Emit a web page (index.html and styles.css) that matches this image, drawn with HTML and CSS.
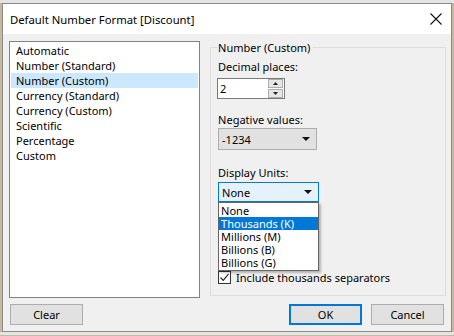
FILE: index.html
```html
<!DOCTYPE html>
<html lang="en">
<head>
<meta charset="UTF-8">
<title>Default Number Format [Discount]</title>
<link rel="stylesheet" href="styles.css">
</head>
<body>
  <div class="window">
    <div class="titlebar">
      <span class="title">Default Number Format [Discount]</span>
      <svg class="close" width="12" height="12" viewBox="0 0 12 12">
        <path d="M0.5 0.5 L11.5 11.5 M11.5 0.5 L0.5 11.5" stroke="#111" stroke-width="1.1" fill="none"/>
      </svg>
    </div>

    <div class="content">
      <ul class="format-list">
        <li>Automatic</li>
        <li>Number (Standard)</li>
        <li class="selected">Number (Custom)</li>
        <li>Currency (Standard)</li>
        <li>Currency (Custom)</li>
        <li>Scientific</li>
        <li>Percentage</li>
        <li>Custom</li>
      </ul>

      <fieldset class="options">
        <legend>Number (Custom)</legend>

        <div class="label first">Decimal places:</div>
        <div class="spinner">
          <span class="spin-value">2</span>
          <div class="spin-buttons">
            <div class="spin-btn">
              <svg width="5" height="3" viewBox="0 0 5 3"><path d="M0 3 L2.5 0 L5 3 Z" fill="#222"/></svg>
            </div>
            <div class="spin-btn">
              <svg width="5" height="3" viewBox="0 0 5 3"><path d="M0 0 L2.5 3 L5 0 Z" fill="#222"/></svg>
            </div>
          </div>
        </div>

        <div class="label">Negative values:</div>
        <div class="combo combo-negative">
          <span>-1234</span>
          <svg class="arrow" width="8" height="4" viewBox="0 0 8 4"><path d="M0 0 L8 0 L4 4 Z" fill="#111"/></svg>
        </div>

        <div class="label units">Display Units:</div>
        <div class="combo combo-units">
          <span>None</span>
          <svg class="arrow" width="8" height="4" viewBox="0 0 8 4"><path d="M0 0 L8 0 L4 4 Z" fill="#111"/></svg>
          <ul class="dropdown">
            <li>None</li>
            <li class="hover">Thousands (K)</li>
            <li>Millions (M)</li>
            <li>Billions (B)</li>
            <li>Billions (G)</li>
          </ul>
        </div>

        <label class="check-row">
          <span class="checkbox">
            <svg width="11" height="11" viewBox="0 0 11 11"><path d="M1.5 5.5 L4.2 8.3 L9.5 2.2" stroke="#222" stroke-width="1.2" fill="none"/></svg>
          </span>
          Include thousands separators
        </label>
      </fieldset>
    </div>

    <div class="footer">
      <button class="btn">Clear</button>
      <div class="spacer"></div>
      <button class="btn btn-default">OK</button>
      <button class="btn">Cancel</button>
    </div>
  </div>
</body>
</html>
```

FILE: styles.css
```css
body {
  margin: 0;
  font-family: "Noto Sans", "Open Sans", sans-serif;
  font-size: 11px;
  color: #000;
  background: linear-gradient(#e4e4e4 0, #e4e4e4 3px, #c9b79a 3px);
  overflow: hidden;
}
.window {
  margin: 3px 2px 0;
  height: 327px;
  border: 1px solid #8a8a8a;
  background-color: #f0f0f0;
  display: flex;
  flex-direction: column;
}
.titlebar {
  height: 30px;
  background-color: #fff;
  display: flex;
  align-items: center;
  justify-content: space-between;
  padding: 0 9px 0 7px;
}
.title {
  font-size: 11.3px;
  line-height: 15px;
}
.content {
  display: flex;
  padding: 7px 5px 0 6px;
  gap: 10px;
  height: 255px;
}
.format-list {
  list-style: none;
  margin: 0;
  padding: 1px;
  width: 188px;
  height: 253px;
  border: 1px solid #828282;
  background-color: #fff;
}
.format-list li {
  height: 15px;
  line-height: 15px;
  padding-left: 5px;
}
.format-list li.selected {
  background-color: #cce8ff;
}
.options {
  margin: -1px 0 0;
  padding: 0 7px 10px 7px;
  width: 221px;
  border: 1px solid #dcdcdc;
  display: flex;
  flex-direction: column;
  align-items: flex-start;
}
.options legend {
  padding: 0 3px 0 0;
  line-height: 15px;
}
.label {
  line-height: 15px;
  margin-top: 13px;
}
.label.first {
  margin-top: 4px;
}
.label.units {
  margin-top: 15px;
}
.spinner {
  margin-top: 4px;
  margin-left: -1px;
  width: 64px;
  height: 19px;
  border: 1px solid #7a7a7a;
  background-color: #fff;
  display: flex;
  align-items: center;
  justify-content: space-between;
  padding-left: 2px;
  box-sizing: content-box;
}
.spin-value {
  line-height: 15px;
}
.spin-buttons {
  display: flex;
  flex-direction: column;
  margin-right: 1px;
  gap: 1px;
}
.spin-btn {
  width: 13px;
  height: 7px;
  border: 1px solid #adadad;
  background-color: #e6e6e6;
  display: flex;
  align-items: center;
  justify-content: center;
}
.combo {
  position: relative;
  width: 99px;
  border: 1px solid #adadad;
  background-color: #e1e1e1;
  display: flex;
  align-items: center;
  padding-left: 3px;
  box-sizing: border-box;
}
.combo-negative {
  margin-top: 1px;
  height: 22px;
}
.combo-units {
  margin-top: 2px;
  width: 101px;
  height: 20px;
  border-color: #0078d7;
  background-color: #e5f1fb;
}
.combo .arrow {
  position: absolute;
  right: 6px;
  top: 50%;
  margin-top: -2px;
}
.dropdown {
  position: absolute;
  top: 19px;
  left: -1px;
  width: 101px;
  margin: 0;
  padding: 1px 0;
  list-style: none;
  border: 1px solid #646464;
  background-color: #fff;
  box-shadow: 2px 2px 2px rgba(0, 0, 0, 0.25);
  box-sizing: border-box;
  z-index: 2;
}
.dropdown li {
  height: 13px;
  line-height: 13px;
  padding-left: 2px;
  font-size: 11px;
}
.dropdown li.hover {
  background-color: #0078d7;
  color: #fff;
}
.check-row {
  margin-top: auto;
  display: flex;
  align-items: center;
  gap: 5px;
  line-height: 15px;
}
.checkbox {
  width: 11px;
  height: 11px;
  border: 1px solid #333;
  background-color: #fff;
  display: flex;
}
.footer {
  display: flex;
  padding: 8px 7px 0 7px;
  gap: 9px;
}
.spacer {
  flex: 1;
}
.btn {
  width: 73px;
  height: 21px;
  padding: 0;
  font-family: inherit;
  font-size: 11px;
  color: #000;
  background-color: #e1e1e1;
  border: 1px solid #adadad;
}
.btn-default {
  border: 2px solid #0078d7;
}
```
